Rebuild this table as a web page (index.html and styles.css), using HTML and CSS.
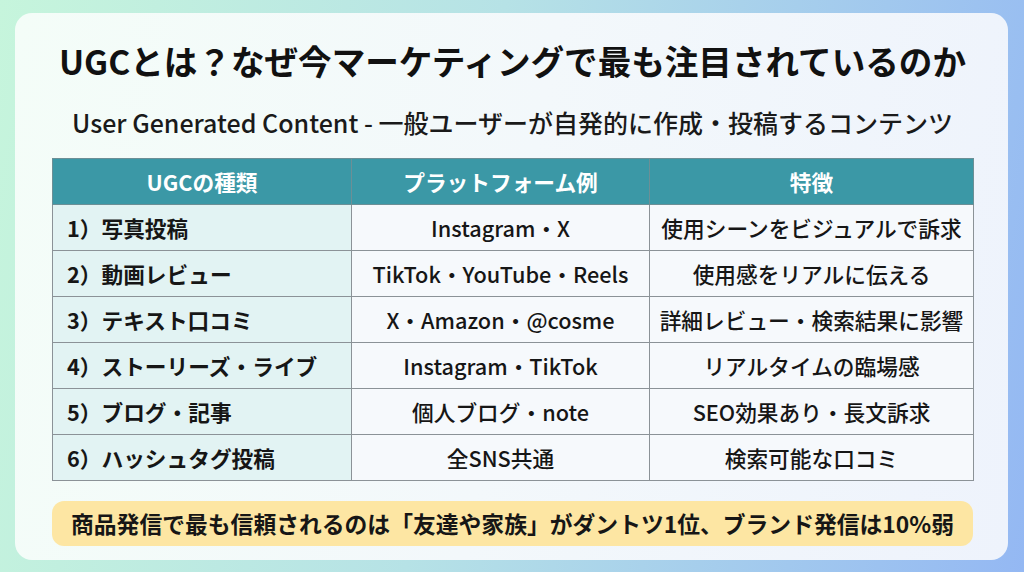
FILE: index.html
```html
<!DOCTYPE html>
<html lang="ja">
<head>
<meta charset="utf-8">
<title>UGCとは</title>
<link rel="stylesheet" href="styles.css">
</head>
<body>
<main class="card">
  <h1 class="title">UGCとは？なぜ今マーケティングで最も注目されているのか</h1>
  <p class="subtitle">User Generated Content - 一般ユーザーが自発的に作成・投稿するコンテンツ</p>
  <table class="ugc-table">
    <colgroup>
      <col class="c1"><col class="c2"><col class="c3">
    </colgroup>
    <thead>
      <tr><th>UGCの種類</th><th>プラットフォーム例</th><th>特徴</th></tr>
    </thead>
    <tbody>
      <tr><td class="kind">1）写真投稿</td><td>Instagram・X</td><td>使用シーンをビジュアルで訴求</td></tr>
      <tr><td class="kind">2）動画レビュー</td><td>TikTok・YouTube・Reels</td><td>使用感をリアルに伝える</td></tr>
      <tr><td class="kind">3）テキスト口コミ</td><td>X・Amazon・@cosme</td><td>詳細レビュー・検索結果に影響</td></tr>
      <tr><td class="kind">4）ストーリーズ・ライブ</td><td>Instagram・TikTok</td><td>リアルタイムの臨場感</td></tr>
      <tr><td class="kind">5）ブログ・記事</td><td>個人ブログ・note</td><td>SEO効果あり・長文訴求</td></tr>
      <tr><td class="kind">6）ハッシュタグ投稿</td><td>全SNS共通</td><td>検索可能な口コミ</td></tr>
    </tbody>
  </table>
  <p class="note">商品発信で最も信頼されるのは「友達や家族」がダントツ1位、ブランド発信は10%弱</p>
</main>
</body>
</html>
```

FILE: styles.css
```css
* { box-sizing: border-box; }
html, body { margin: 0; padding: 0; }
body {
  width: 1024px;
  height: 572px;
  overflow: hidden;
  background: linear-gradient(100deg, #c6f5dc 0%, #b6e2e6 45%, #94b8f3 100%);
  font-family: "Noto Sans CJK JP", "Noto Sans", sans-serif;
  color: #161616;
  padding: 13px 16px 12px 15px;
}
.card {
  height: 547px;
  border-radius: 17px;
  background: linear-gradient(100deg, #f4fdf8 0%, #f3f8fb 50%, #eef3fc 100%);
  padding: 27px 35px 0 37px;
  display: flex;
  flex-direction: column;
  align-items: stretch;
}
.title {
  margin: 0;
  font-size: 33.6px;
  line-height: 42px;
  font-weight: 700;
  text-align: center;
  color: #111;
  white-space: nowrap;
}
.subtitle {
  margin: 23px 0 0;
  font-size: 25px;
  line-height: 34px;
  font-weight: 500;
  text-align: center;
  color: #1a1a1a;
  white-space: nowrap;
}
.ugc-table {
  margin-top: 19px;
  width: 921px;
  border-collapse: collapse;
  table-layout: fixed;
  font-size: 21.7px;
}
.c1 { width: 299px; }
.c2 { width: 298px; }
.c3 { width: 324px; }
.ugc-table th,
.ugc-table td {
  height: 46px;
  padding: 0 4px;
  border: 1px solid #8b9297;
  text-align: center;
  vertical-align: middle;
  line-height: 28px;
  white-space: nowrap;
}
.ugc-table th {
  background: #3b98a6;
  color: #fff;
  font-weight: 700;
  border-color: #6c8f96;
}
.ugc-table td {
  background: #f6f9fc;
  font-weight: 500;
}
.ugc-table td.kind {
  text-align: left;
  padding-left: 14px;
  font-weight: 700;
  background: #e2f3f3;
}
.note {
  margin: 20px 0 0;
  height: 45px;
  border-radius: 12px;
  background: #fde6a3;
  font-size: 22.8px;
  line-height: 45px;
  font-weight: 700;
  text-align: center;
  color: #161616;
  white-space: nowrap;
}
```
